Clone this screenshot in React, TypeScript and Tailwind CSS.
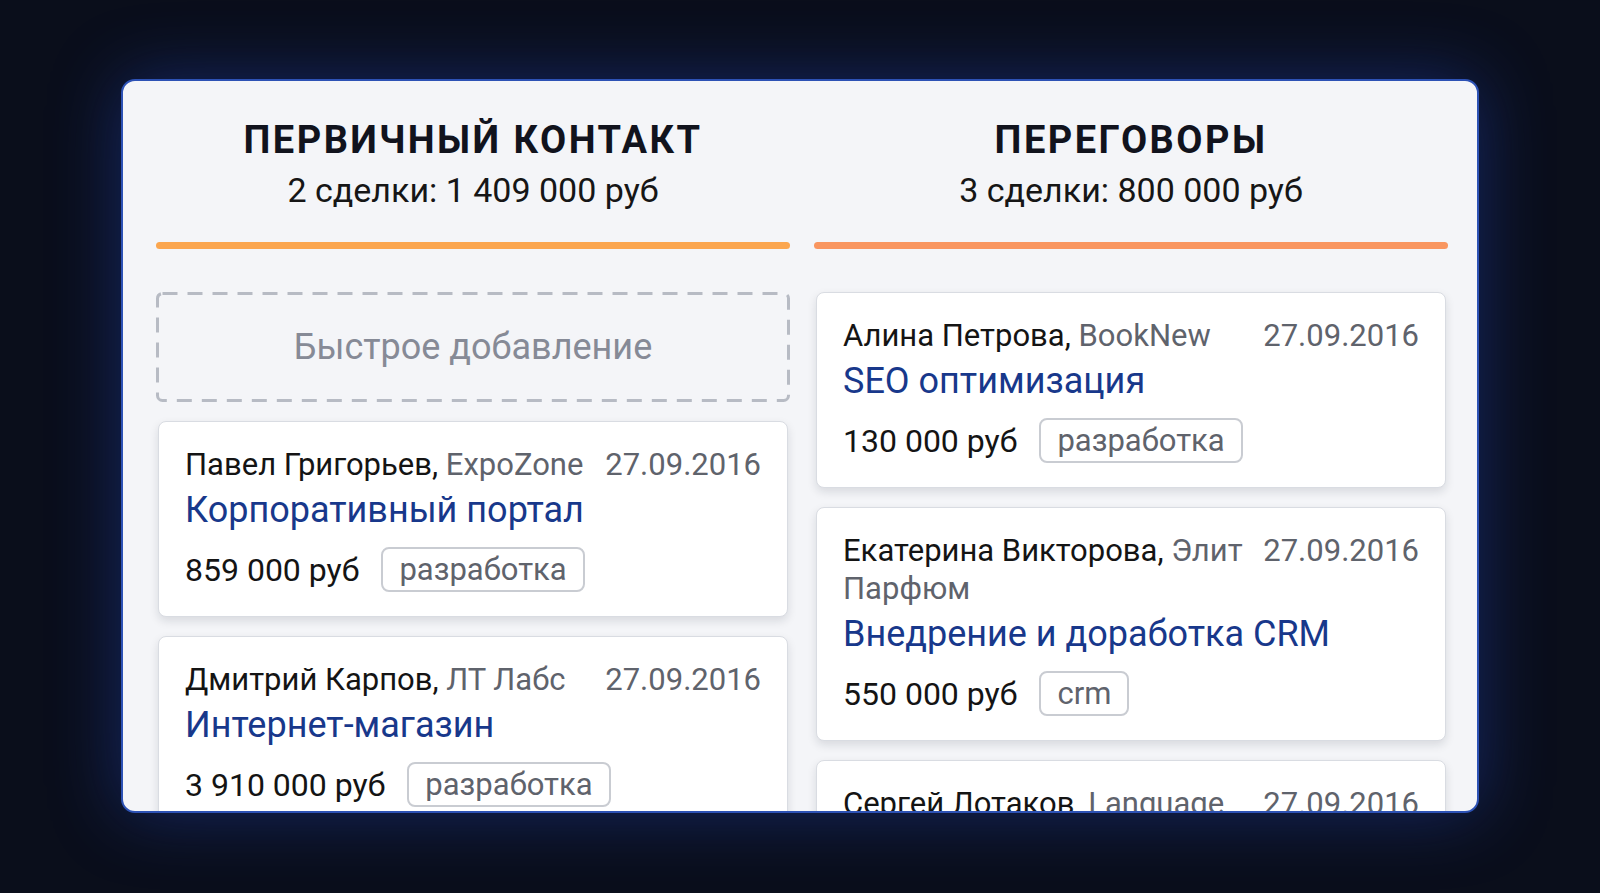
import React from 'react'

type Deal = {
  person: string
  company: string
  date: string
  title: string
  amount: string
  tag: string
}

type Stage = {
  name: string
  summary: string
  quickAdd?: boolean
  deals: Deal[]
}

const stages: Stage[] = [
  {
    name: 'ПЕРВИЧНЫЙ КОНТАКТ',
    summary: '2 сделки: 1 409 000 руб',
    quickAdd: true,
    deals: [
      {
        person: 'Павел Григорьев,',
        company: 'ExpoZone',
        date: '27.09.2016',
        title: 'Корпоративный портал',
        amount: '859 000 руб',
        tag: 'разработка',
      },
      {
        person: 'Дмитрий Карпов,',
        company: 'ЛТ Лабс',
        date: '27.09.2016',
        title: 'Интернет-магазин',
        amount: '3 910 000 руб',
        tag: 'разработка',
      },
    ],
  },
  {
    name: 'ПЕРЕГОВОРЫ',
    summary: '3 сделки: 800 000 руб',
    deals: [
      {
        person: 'Алина Петрова,',
        company: 'BookNew',
        date: '27.09.2016',
        title: 'SEO оптимизация',
        amount: '130 000 руб',
        tag: 'разработка',
      },
      {
        person: 'Екатерина Викторова,',
        company: 'Элит Парфюм',
        date: '27.09.2016',
        title: 'Внедрение и доработка CRM',
        amount: '550 000 руб',
        tag: 'crm',
      },
      {
        person: 'Сергей Лотаков,',
        company: 'Language',
        date: '27.09.2016',
        title: 'Локализация сайта',
        amount: '120 000 руб',
        tag: 'перевод',
      },
    ],
  },
]

function DealCard({ deal }: { deal: Deal }) {
  return (
    <div className="mx-[2px] rounded-[8px] border border-[#d9dce2] bg-white px-[26px] pt-[24px] pb-[24px] shadow-[0_4px_10px_rgba(20,25,40,0.12)]">
      <div className="flex items-start justify-between gap-[10px]">
        <p className="min-w-0 text-[31px] leading-[38px] text-[#141414]">
          {deal.person} <span className="text-[#5f636c]">{deal.company}</span>
        </p>
        <span className="shrink-0 text-[31px] leading-[38px] text-[#5f636c]">{deal.date}</span>
      </div>
      <p className="text-[36px] leading-[52px] text-[#18388b]">{deal.title}</p>
      <div className="mt-[11px] flex items-center gap-[22px]">
        <span className="text-[32px] leading-none text-[#141414]">{deal.amount}</span>
        <span className="flex h-[45px] items-center rounded-[8px] border-2 border-[#c9ccd2] px-[16px] text-[31px] leading-none text-[#5f636c]">
          {deal.tag}
        </span>
      </div>
    </div>
  )
}

function QuickAdd() {
  return (
    <div className="relative flex h-[110px] items-center justify-center text-[36px] text-[#868a96]">
      <svg className="absolute inset-0 h-full w-full" preserveAspectRatio="none">
        <rect
          x="1.5"
          y="1.5"
          width="calc(100% - 3px)"
          height="calc(100% - 3px)"
          rx="5"
          fill="none"
          stroke="#b7bbc4"
          strokeWidth="3"
          strokeDasharray="15 10"
        />
      </svg>
      Быстрое добавление
    </div>
  )
}

function StageColumn({ stage, first }: { stage: Stage; first: boolean }) {
  return (
    <div className="flex min-w-0 flex-1 flex-col">
      <div className="pt-[36px] text-center">
        <h2 className="text-[38px] leading-[46px] font-bold tracking-[0.065em] text-[#11131d]">
          {stage.name}
        </h2>
        <p className="mt-[5px] text-[34px] leading-[44px] text-[#161616]">{stage.summary}</p>
      </div>
      {first ? (
        <div className="mt-[30px] h-[7px] shrink-0 rounded-full bg-[#fba64f]" />
      ) : (
        <div className="mt-[30px] h-[7px] shrink-0 rounded-full bg-[#f99660]" />
      )}
      <div className="mt-[43px] flex flex-col gap-[19px]">
        {stage.quickAdd && <QuickAdd />}
        {stage.deals.map((d) => (
          <DealCard key={d.person} deal={d} />
        ))}
      </div>
    </div>
  )
}

export default function App() {
  return (
    <div className="h-[893px] w-full overflow-hidden bg-[#0a0e1b] pt-[79px] font-['Roboto',sans-serif]">
      <div className="mx-auto flex h-[734px] w-[1358px] gap-[24px] overflow-hidden rounded-[14px] border-2 border-[#2d52b5] bg-[#f4f5f8] pr-[29px] pl-[33px] shadow-[0_0_70px_rgba(35,70,190,0.45)]">
        {stages.map((s, i) => (
          <StageColumn key={s.name} stage={s} first={i === 0} />
        ))}
      </div>
    </div>
  )
}
